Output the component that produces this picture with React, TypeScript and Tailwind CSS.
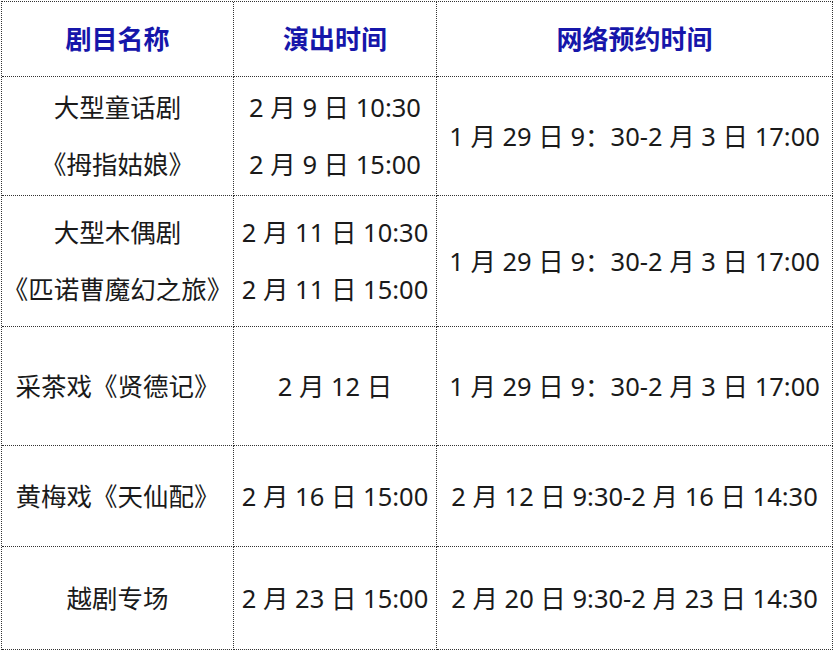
const rows: { name: string[]; show: string[]; book: string; h: string }[] = [
  { name: ['大型童话剧', '《拇指姑娘》'], show: ['2 月 9 日 10:30', '2 月 9 日 15:00'], book: '1 月 29 日 9：30-2 月 3 日 17:00', h: 'h-[119px]' },
  { name: ['大型木偶剧', '《匹诺曹魔幻之旅》'], show: ['2 月 11 日 10:30', '2 月 11 日 15:00'], book: '1 月 29 日 9：30-2 月 3 日 17:00', h: 'h-[131px]' },
  { name: ['采茶戏《贤德记》'], show: ['2 月 12 日'], book: '1 月 29 日 9：30-2 月 3 日 17:00', h: 'h-[119px]' },
  { name: ['黄梅戏《天仙配》'], show: ['2 月 16 日 15:00'], book: '2 月 12 日 9:30-2 月 16 日 14:30', h: 'h-[101px]' },
  { name: ['越剧专场'], show: ['2 月 23 日 15:00'], book: '2 月 20 日 9:30-2 月 23 日 14:30', h: 'h-[103px]' },
];

const cell = 'flex flex-col items-center justify-center border-r border-b border-dotted border-[#333] text-center';

export default function App() {
  return (
    <div
      className="w-[836px] h-[652px] bg-white pt-[1px] pl-[1px] overflow-hidden"
      style={{ fontFamily: '"Noto Sans", "Noto Sans CJK SC", sans-serif' }}
    >
      <div className="grid grid-cols-[232px_203px_396px] border-t border-l border-dotted border-[#333] w-fit text-[25.5px] text-[#1a1a1a]">
        {['剧目名称', '演出时间', '网络预约时间'].map((t) => (
          <div key={t} className={`${cell} h-[75px] text-[26px] font-bold text-[#1616aa]`}>
            {t}
          </div>
        ))}
        {rows.map((r, i) => (
          <div key={i} className="contents">
            <div className={`${cell} ${r.h} leading-[57px]`}>
              {r.name.map((n) => (
                <div key={n} className="whitespace-nowrap">{n}</div>
              ))}
            </div>
            <div className={`${cell} ${r.h} leading-[57px]`}>
              {r.show.map((s) => (
                <div key={s} className="whitespace-nowrap">{s}</div>
              ))}
            </div>
            <div className={`${cell} ${r.h}`}>
              <div className="whitespace-nowrap">{r.book}</div>
            </div>
          </div>
        ))}
      </div>
    </div>
  );
}
